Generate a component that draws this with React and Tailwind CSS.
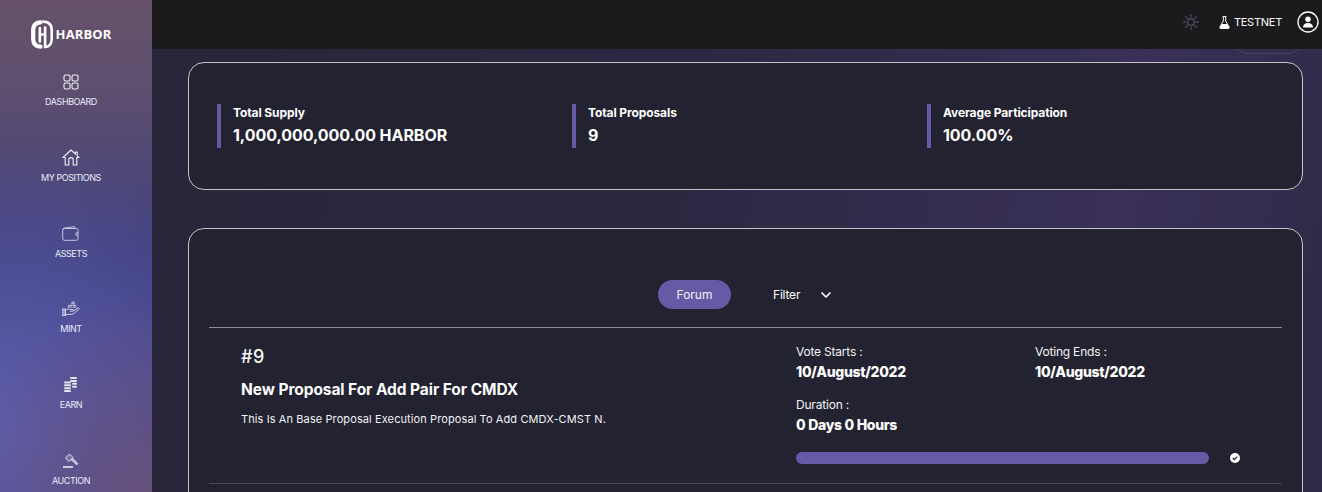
import { ChevronDown } from 'lucide-react'

const POPPINS = "font-['Inter','Noto_Sans',sans-serif]"

// ─── Sidebar icons ───────────────────────────────────────────────────────────

function DashboardIcon() {
  return (
    <svg width="16" height="16" viewBox="0 0 16 16" fill="none" stroke="#f1f1f6" strokeWidth="1.1">
      <rect x="1" y="1" width="6" height="6" rx="1.5" />
      <rect x="9" y="1" width="6" height="6" rx="1.5" />
      <rect x="1" y="9" width="6" height="6" rx="1.5" />
      <rect x="9" y="9" width="6" height="6" rx="1.5" />
    </svg>
  )
}

function HomeIcon() {
  return (
    <svg width="18" height="17" viewBox="0 0 18 17" fill="none" stroke="#f1f1f6" strokeWidth="1.1" strokeLinejoin="round" strokeLinecap="round">
      <path d="M1 8.5 9 1l4.5 4.2V3h1.7v3.8L17 8.5h-2.2V16h-3.6v-5.2a2.2 2.2 0 0 0-4.4 0V16H3.2V8.5Z" />
    </svg>
  )
}

function WalletIcon() {
  return (
    <svg width="17" height="15" viewBox="0 0 17 15" fill="none" stroke="#d4d4e6" strokeWidth="0.9">
      <path d="M1 3.5A1.5 1.5 0 0 1 2.5 2L12 .8c.8 0 1.2.5 1.2 1.2" />
      <rect x="0.7" y="2.5" width="15.3" height="11.8" rx="1.8" />
      <path d="M16 6.8h-1a1.3 1.3 0 0 0 0 2.6h1" />
    </svg>
  )
}

function MintIcon() {
  return (
    <svg width="18" height="15" viewBox="0 0 18 15" fill="none" stroke="#dcdcec" strokeWidth="0.9" strokeLinecap="round" strokeLinejoin="round">
      <rect x="0.5" y="8" width="3" height="6.5" fill="#e4e4f0" fillOpacity="0.5" />
      <path d="M3.5 9c2-1.4 3.6-1.2 5.2-.4h2.2c1 0 1 1.6 0 1.6H8.2" />
      <path d="M3.5 13.4h5.4c1.6 0 2.8-.8 4-1.8l3.8-3.4c.8-.9-.2-1.9-1.2-1.2l-3.2 2.4" />
      <path d="M6 6h3.4M6.5 4.4h3M11 6h3M11 4.4h2.6M9.5 2.8h3M10 1.2h2.4" />
    </svg>
  )
}

function EarnIcon() {
  return (
    <svg width="13" height="15" viewBox="0 0 13 15" fill="#e4e4f0">
      <rect x="6" y="0" width="7" height="2" rx="1" />
      <rect x="6" y="2.9" width="7" height="2" rx="1" />
      <rect x="8" y="5.8" width="5" height="2" rx="1" />
      <rect x="8" y="8.7" width="5" height="2" rx="1" />
      <rect x="0" y="4.4" width="7" height="2" rx="1" />
      <rect x="0" y="7.3" width="7" height="2" rx="1" />
      <rect x="0" y="10.2" width="7" height="2" rx="1" />
      <rect x="0" y="13" width="7" height="2" rx="1" />
    </svg>
  )
}

function AuctionIcon() {
  return (
    <svg width="17" height="15" viewBox="0 0 17 15" fill="none" stroke="#e8e8f2" strokeWidth="1">
      <path d="M7.5 1 3.5 5 7 8.5l4-4Z" fill="#e8e8f2" fillOpacity="0.2" />
      <path d="m9 6.5 5.8 5.3 1-1.2L10.3 5" fill="#e8e8f2" fillOpacity="0.6" />
      <path d="M1 14h10" strokeWidth="1.6" />
    </svg>
  )
}

const NAV = [
  { label: 'DASHBOARD', icon: <DashboardIcon /> },
  { label: 'MY POSITIONS', icon: <HomeIcon /> },
  { label: 'ASSETS', icon: <WalletIcon /> },
  { label: 'MINT', icon: <MintIcon /> },
  { label: 'EARN', icon: <EarnIcon /> },
  { label: 'AUCTION', icon: <AuctionIcon /> },
]

function Logo() {
  return (
    <div className="flex items-center gap-[3px] h-[30px]">
      <svg width="22" height="29" viewBox="0 0 22 29" fill="none" stroke="#fff" strokeLinecap="round">
        <path d="M9.5 2.3C4.500 2.500 2.200 5.500 2.200 10v9c0 4.500 2.300 7.500 7.300 7.700" strokeWidth="4.2" />
        <path d="M12.500 1.600C18 1.800 20.700 5 20.700 10v9c0 5-2.800 7.800-6.600 8V7.500" strokeWidth="2.6" />
        <path d="M8.800 8v13.500M8.800 14.500h5" strokeWidth="2.6" />
      </svg>
      <span className="text-white text-[13px] font-bold tracking-[0.1px] font-['Open_Sans',sans-serif] leading-none">HARBOR</span>
    </div>
  )
}

function Sidebar() {
  return (
    <aside className="w-[152px] h-[492px] shrink-0 overflow-hidden pr-[10px] flex flex-col items-center bg-[radial-gradient(circle_at_100%_100%,#65507a_0%,rgba(101,80,122,0)_38%),radial-gradient(circle_at_0%_88%,#5e5fae_0%,rgba(94,95,174,0)_62%),linear-gradient(180deg,#66526a_0%,#5c4e70_20%,#40407f_52%,#4a4690_100%)]">
      <div className="mt-[19px]"><Logo /></div>
      <nav className="mt-[24px] flex flex-col items-center">
        {NAV.map((item) => (
          <div key={item.label} className="h-[75.8px] flex flex-col items-center">
            <div className="h-[17px] flex items-center justify-center">{item.icon}</div>
            <span className={`mt-[6px] text-[9px] leading-[12px] text-[#e9ecf8] tracking-[-0.45px] ${POPPINS}`}>{item.label}</span>
          </div>
        ))}
      </nav>
    </aside>
  )
}

// ─── Top bar ─────────────────────────────────────────────────────────────────

function TopBar() {
  return (
    <header className="relative z-10 h-[49px] shrink-0 bg-[#1b1b1d] flex items-center justify-end pr-[3px]">
      <svg width="16" height="16" viewBox="0 0 16 16" fill="none" stroke="#4f4f63" strokeWidth="1.3" strokeLinecap="round" className="mr-[20px] mt-[-5px]">
        <circle cx="8" cy="8" r="3.3" />
        <path d="M8 .7v2M8 13.3v2M.7 8h2M13.3 8h2M2.8 2.8l1.400 1.400M11.800 11.800l1.400 1.400M2.800 13.200l1.400-1.400M11.800 4.200l1.400-1.400" />
      </svg>
      <svg width="11" height="13" viewBox="0 0 11 13" fill="none" stroke="#fff" strokeWidth="1" strokeLinejoin="round" className="mt-[-5px] mr-[4px]">
        <path d="M3.500 .6h4M4.300 1v4L.8 11.200c-.3.600.1 1.200.7 1.200h8c.6 0 1-.6.700-1.200L6.700 5V1" />
        <path d="M2.600 8.500h5.800l1.500 3.500H1.200Z" fill="#fff" />
      </svg>
      <span className={`text-[11px] text-white tracking-[-0.25px] mt-[-5px] mr-[15px] ${POPPINS}`}>TESTNET</span>
      <svg width="22" height="22" viewBox="0 0 22 22" className="mt-[-5px]">
        <circle cx="11" cy="11" r="10" fill="none" stroke="#fff" strokeWidth="1.3" />
        <circle cx="11" cy="8.3" r="2.7" fill="#fff" />
        <path d="M6 16.500c0-3 2-4.500 5-4.500s5 1.500 5 4.500Z" fill="#fff" />
      </svg>
    </header>
  )
}

// ─── Cards ───────────────────────────────────────────────────────────────────

function Stat({ label, value, width }) {
  return (
    <div className={`border-l-[4px] border-[#665aa6] pl-[12px] h-[44px] ${width}`}>
      <div className={`mt-[1px] text-[12px] leading-[16px] font-bold tracking-[-0.1px] text-white ${POPPINS}`}>{label}</div>
      <div className={`mt-[2px] text-[16px] leading-[24px] font-bold tracking-[-0.05px] text-white ${POPPINS}`}>{value}</div>
    </div>
  )
}

function Field({ label, value, className }) {
  return (
    <div className={className}>
      <div className={`text-[12px] leading-[16px] tracking-[-0.2px] text-[#f2f2f5] ${POPPINS}`}>{label}</div>
      <div className={`mt-[2px] text-[14px] leading-[20px] font-extrabold tracking-[-0.3px] text-white ${POPPINS}`}>{value}</div>
    </div>
  )
}

function Proposal() {
  return (
    <div className="border-t border-[#8e8e96] pl-[32px] flex">
      <div className="w-[555px] pt-[19px]">
        <div className={`text-[18px] leading-[20px] font-medium tracking-[0.5px] text-[#f5f5f7] ${POPPINS}`}>#9</div>
        <h3 className={`mt-[11px] text-[15.5px] leading-[24px] font-bold tracking-[-0.07px] text-white ${POPPINS}`}>New Proposal For Add Pair For CMDX</h3>
        <p className={`mt-[9px] text-[11px] leading-[16px] tracking-[0.1px] text-[#f2f2f5] ${POPPINS}`}>This Is An Base Proposal Execution Proposal To Add CMDX-CMST N.</p>
      </div>
      <div className="pt-[16px] w-[456px]">
        <div className="flex">
          <Field className="w-[239px]" label="Vote Starts :" value="10/August/2022" />
          <Field label="Voting Ends :" value="10/August/2022" />
        </div>
        <Field className="mt-[15px]" label="Duration :" value="0 Days 0 Hours" />
        <div className="mt-[17px] flex items-center">
          <div className="w-[413px] h-[12px] rounded-full bg-[#665aa6]" />
          <svg width="10" height="10" viewBox="0 0 10 10" className="ml-[21px]">
            <circle cx="5" cy="5" r="5" fill="#fff" />
            <path d="m2.800 5 1.600 1.600 2.800-3" fill="none" stroke="#24232f" strokeWidth="1.2" />
          </svg>
        </div>
      </div>
    </div>
  )
}

export default function App() {
  return (
    <div className="w-[1322px] h-[492px] overflow-hidden flex bg-[#2a2640]">
      <Sidebar />
      <div className="flex-1 min-w-0 flex flex-col relative bg-[linear-gradient(100deg,#28253a_0%,#2c2842_45%,#3a3058_80%,#2f2a46_100%)]">
        <TopBar />
        <div className="absolute right-[21px] top-[30px] w-[66px] h-[24px] rounded-full border border-[#4a4368]" />
        <main className="relative pl-[36px] pr-[19px] pt-[13px]">
          <section className="h-[128px] rounded-[16px] border border-[#c4c4c8] bg-[#232230] pl-[28px] flex items-center">
            <Stat width="w-[355px]" label="Total Supply" value="1,000,000,000.00 HARBOR" />
            <Stat width="w-[355px]" label="Total Proposals" value="9" />
            <Stat width="w-[300px]" label="Average Participation" value="100.00%" />
          </section>
          <section className="mt-[38px] h-[300px] rounded-[16px] border border-[#c4c4c8] bg-[#232230] px-[20px]">
            <div className="pt-[51px] pl-[8px] h-[98px] flex justify-center">
              <button className={`w-[73px] h-[29px] rounded-full bg-[#665aa6] text-[12px] text-[#f2f2f5] ${POPPINS}`}>Forum</button>
              <div className="ml-[14px] w-[96px] h-[27px] mt-[1px] rounded-full border border-[#28263d] flex items-center justify-between pl-[27px] pr-[6px]">
                <span className={`text-[12px] tracking-[-0.2px] text-white ${POPPINS}`}>Filter</span>
                <ChevronDown size={16} color="#fff" strokeWidth={2.5} />
              </div>
            </div>
            <Proposal />
            <div className="mt-[19px] border-t border-[#45444f]" />
          </section>
        </main>
      </div>
    </div>
  )
}
